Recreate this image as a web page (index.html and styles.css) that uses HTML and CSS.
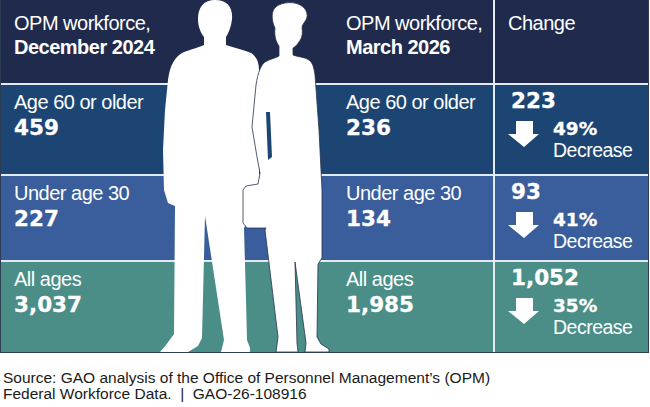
FILE: index.html
```html
<!DOCTYPE html>
<html lang="en">
<head>
<meta charset="utf-8">
<title>OPM workforce by age</title>
<link rel="stylesheet" href="styles.css">
</head>
<body>
<div class="figure">
  <div class="chart">
    <div class="cell head c1">OPM workforce,<br><b>December 2024</b></div>
    <div class="cell head c2">OPM workforce,<br><b>March 2026</b></div>
    <div class="cell head c3">Change</div>

    <div class="cell r1 c1"><div class="label">Age 60 or older</div><div class="num">459</div></div>
    <div class="cell r1 c2"><div class="label">Age 60 or older</div><div class="num">236</div></div>
    <div class="cell r1 c3 chg">
      <div class="num">223</div>
      <div class="pct-row">
        <svg class="arrow" viewBox="0 0 31 26"><path d="M8 0H25V13H31L16 26L0 13H8Z"/></svg>
        <div><div class="pct">49%</div><div class="dec">Decrease</div></div>
      </div>
    </div>

    <div class="cell r2 c1"><div class="label">Under age 30</div><div class="num">227</div></div>
    <div class="cell r2 c2"><div class="label">Under age 30</div><div class="num">134</div></div>
    <div class="cell r2 c3 chg">
      <div class="num">93</div>
      <div class="pct-row">
        <svg class="arrow" viewBox="0 0 31 26"><path d="M8 0H25V13H31L16 26L0 13H8Z"/></svg>
        <div><div class="pct">41%</div><div class="dec">Decrease</div></div>
      </div>
    </div>

    <div class="cell r3 c1"><div class="label">All ages</div><div class="num">3,037</div></div>
    <div class="cell r3 c2"><div class="label">All ages</div><div class="num">1,985</div></div>
    <div class="cell r3 c3 chg">
      <div class="num">1,052</div>
      <div class="pct-row">
        <svg class="arrow" viewBox="0 0 31 26"><path d="M8 0H25V13H31L16 26L0 13H8Z"/></svg>
        <div><div class="pct">35%</div><div class="dec">Decrease</div></div>
      </div>
    </div>

    <svg class="people" viewBox="150 0 190 352" aria-hidden="true">
      <path class="man" d="M215 0C227 0 233 7 232 19C231 28 228 34 226 37L226 45C234 48 245 50 251 53C257 57 259 63 259 70L259 200L244 228L246 300L247 340L250 348L250 352L221 352L224 340L205 216L202 338L198 346L188 352L160 352L166 345L174 334L175 206L168 203L164 190L163 150L165 110L168 80C170 65 175 56 184 52C192 49 200 47 204 45L204 37C201 33 198 27 198 19C198 7 204 0 215 0Z"/>
      <path class="woman" d="M265 62C270 59 276 58 279 56L279 46C276 42 274 36 275 28C272 22 271 14 274 9C278 3 290 1 298 4C306 7 309 14 306 20C304 23 302 25 302 28C303 33 302 38 299 42C297 45 295 47 293 48L293 55C298 57 305 57 309 60C313 63 314 68 315 75L319 130L322 190L322 258L318 264L317 337L321 344L329 349L329 352L305 352L306 343L295 262L297 343L298 352L276 352L278 337L265 230L266 228L247 228L243 223L243 190L246 186L258 184L260 173L257 157L252 127L256 85C258 72 261 65 265 62Z"/>
      <path class="armgap" d="M266 112L270 112L272 157L268 160Z"/>
    </svg>
  </div>
  <p class="source">Source: GAO analysis of the Office of Personnel Management’s (OPM)<br>Federal Workforce Data.&nbsp; |&nbsp; GAO-26-108916</p>
</div>
</body>
</html>
```

FILE: styles.css
```css
* {
  box-sizing: border-box;
}

body {
  margin: 0;
  background: #ffffff;
  font-family: "Liberation Sans", Arial, sans-serif;
}

.chart {
  position: relative;
  width: 649px;
  display: grid;
  grid-template-columns: 344px 148px 155px;
  grid-template-rows: 83px 89px 84px 90px;
  row-gap: 2px;
  background: #e3eaf1;
  border: 1px solid #2d3d52;
  border-top: 0;
  color: #ffffff;
}

.cell {
  padding-top: 5px;
}

.c1 {
  padding-left: 13px;
}

.c2 {
  padding-left: 1px;
}

.c3 {
  border-left: 2px solid #e3eaf1;
  padding-left: 13px;
}

.head {
  background: #1f2a4c;
  font-size: 20px;
  line-height: 24px;
  letter-spacing: -0.5px;
  padding-top: 11px;
}

.r1 {
  background: #1c4574;
}

.r2 {
  background: #3a5d9b;
}

.r3 {
  background: #4a8e87;
}

.label {
  font-size: 20px;
  line-height: 24px;
  letter-spacing: -0.5px;
}

.num {
  font-family: "DejaVu Sans", sans-serif;
  font-weight: bold;
  font-size: 21.5px;
  line-height: 28px;
  -webkit-text-stroke: 0.3px #ffffff;
}

.chg {
  padding-top: 2px;
}

.chg .num {
  padding-left: 3px;
}

.pct-row {
  display: flex;
  align-items: flex-start;
  gap: 14px;
  margin-top: 3px;
}

.arrow {
  flex: none;
  width: 31px;
  height: 26px;
  margin-top: 3px;
  fill: #ffffff;
}

.pct {
  font-family: "DejaVu Sans", sans-serif;
  font-weight: bold;
  font-size: 18.5px;
  line-height: 22px;
  -webkit-text-stroke: 0.3px #ffffff;
}

.dec {
  font-size: 19.5px;
  line-height: 21px;
  letter-spacing: -0.5px;
}

.people {
  position: absolute;
  left: 149px;
  top: 0;
  width: 190px;
  height: 352px;
  pointer-events: none;
}

.man {
  fill: #ffffff;
}

.woman {
  fill: #ffffff;
  stroke: #26324f;
  stroke-width: 0.8;
}

.armgap {
  fill: #1c4574;
}

.source {
  margin: 17px 0 0;
  padding-left: 3px;
  font-size: 15.5px;
  line-height: 16px;
  color: #1a1a1a;
}
```
